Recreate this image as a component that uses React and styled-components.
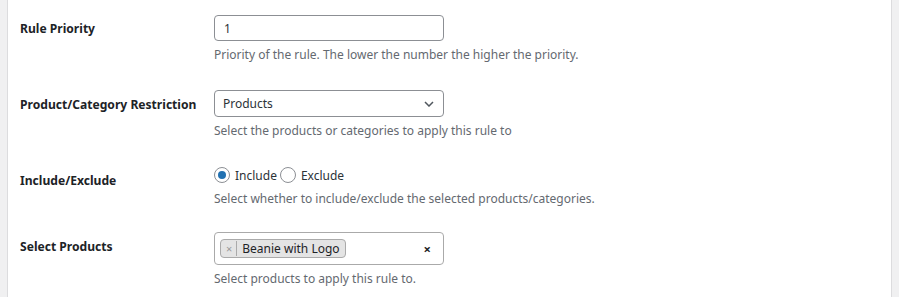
import React from 'react';
import styled, {createGlobalStyle} from 'styled-components';

const GlobalStyle = createGlobalStyle`
  html, body {
    margin: 0;
    padding: 0;
    background: #f0f0f1;
  }
  body {
    font-family: "Noto Sans", "Open Sans", sans-serif;
    color: #1d2327;
  }
`;

const Panel = styled.div`
  margin: 0 7px;
  height: 297px;
  background: #fff;
  border-left: 1px solid #dcdcde;
  border-right: 1px solid #dcdcde;
  padding-left: 12px;
`;

const Row = styled.div`
  display: grid;
  grid-template-columns: 194px 1fr;
`;

const Label = styled.div`
  padding-top: ${p => p.top}px;
  font-size: 12.1px;
  font-weight: 700;
  line-height: 18px;
  color: #1d2327;
`;

const Field = styled.div`
  padding: 15px 0 ${p => p.bottom}px;
`;

const Help = styled.p`
  margin: 4px 0 0;
  font-size: 12px;
  line-height: 20px;
  color: #646970;
`;

const TextInput = styled.input`
  box-sizing: border-box;
  display: block;
  width: 230px;
  height: 26px;
  margin: 0;
  padding: 0 9px;
  border: 1px solid #8c8f94;
  border-radius: 4px;
  font-family: inherit;
  font-size: 12px;
  color: #2c3338;
  outline: none;
`;

const SelectBox = styled.div`
  box-sizing: border-box;
  display: flex;
  align-items: center;
  justify-content: space-between;
  width: 230px;
  height: 27px;
  padding: 0 9px 0 8px;
  border: 1px solid #8c8f94;
  border-radius: 4px;
  font-size: 12px;
  color: #2c3338;
`;

const RadioGroup = styled.div`
  display: flex;
  align-items: center;
  height: 20px;
  font-size: 12px;
  color: #2c3338;
`;

const RadioOption = styled.label`
  display: flex;
  align-items: center;
  gap: 5px;
  margin-right: ${p => p.gap}px;
`;

const RadioDot = styled.span`
  box-sizing: border-box;
  width: 16px;
  height: 16px;
  border-radius: 50%;
  border: 1px solid #8c8f94;
  display: flex;
  align-items: center;
  justify-content: center;
  &::after {
    content: '';
    width: 8px;
    height: 8px;
    border-radius: 50%;
    background: ${p => (p.checked ? '#2271b1' : 'transparent')};
  }
`;

const MultiBox = styled.div`
  box-sizing: border-box;
  display: flex;
  align-items: center;
  width: 230px;
  height: 33px;
  padding: 0 12px 0 5px;
  border: 1px solid #aaa;
  border-radius: 4px;
`;

const Tag = styled.span`
  display: flex;
  align-items: center;
  height: 17px;
  border: 1px solid #aaa;
  border-radius: 4px;
  background: #e4e4e4;
  font-size: 12px;
  color: #1d2327;
`;

const TagRemove = styled.span`
  padding: 0 4px 0 5px;
  border-right: 1px solid #aaa;
  color: #999;
  font-size: 11px;
  line-height: 15px;
`;

const TagText = styled.span`
  padding: 0 5px;
`;

const Clear = styled.span`
  margin-left: auto;
  font-size: 13px;
  font-weight: 700;
  color: #1d2327;
`;

function Chevron() {
  return (
    <svg width="10" height="6" viewBox="0 0 10 6">
      <path d="M1 1 L5 5 L9 1" fill="none" stroke="#50575e" strokeWidth="1.5"/>
    </svg>
  );
}

export default function App() {
  return (
    <>
      <GlobalStyle/>
      <Panel>
        <Row>
          <Label top={20}>Rule Priority</Label>
          <Field bottom={10}>
            <TextInput defaultValue="1"/>
            <Help>Priority of the rule. The lower the number the higher the priority.</Help>
          </Field>
        </Row>
        <Row>
          <Label top={21}>Product/Category Restriction</Label>
          <Field bottom={9}>
            <SelectBox>Products<Chevron/></SelectBox>
            <Help>Select the products or categories to apply this rule to</Help>
          </Field>
        </Row>
        <Row>
          <Label top={22}>Include/Exclude</Label>
          <Field bottom={8}>
            <RadioGroup>
              <RadioOption gap={3}><RadioDot checked/>Include</RadioOption>
              <RadioOption gap={0}><RadioDot/>Exclude</RadioOption>
            </RadioGroup>
            <Help>Select whether to include/exclude the selected products/categories.</Help>
          </Field>
        </Row>
        <Row>
          <Label top={21}>Select Products</Label>
          <Field bottom={9}>
            <MultiBox>
              <Tag><TagRemove>×</TagRemove><TagText>Beanie with Logo</TagText></Tag>
              <Clear>×</Clear>
            </MultiBox>
            <Help>Select products to apply this rule to.</Help>
          </Field>
        </Row>
      </Panel>
    </>
  );
}
